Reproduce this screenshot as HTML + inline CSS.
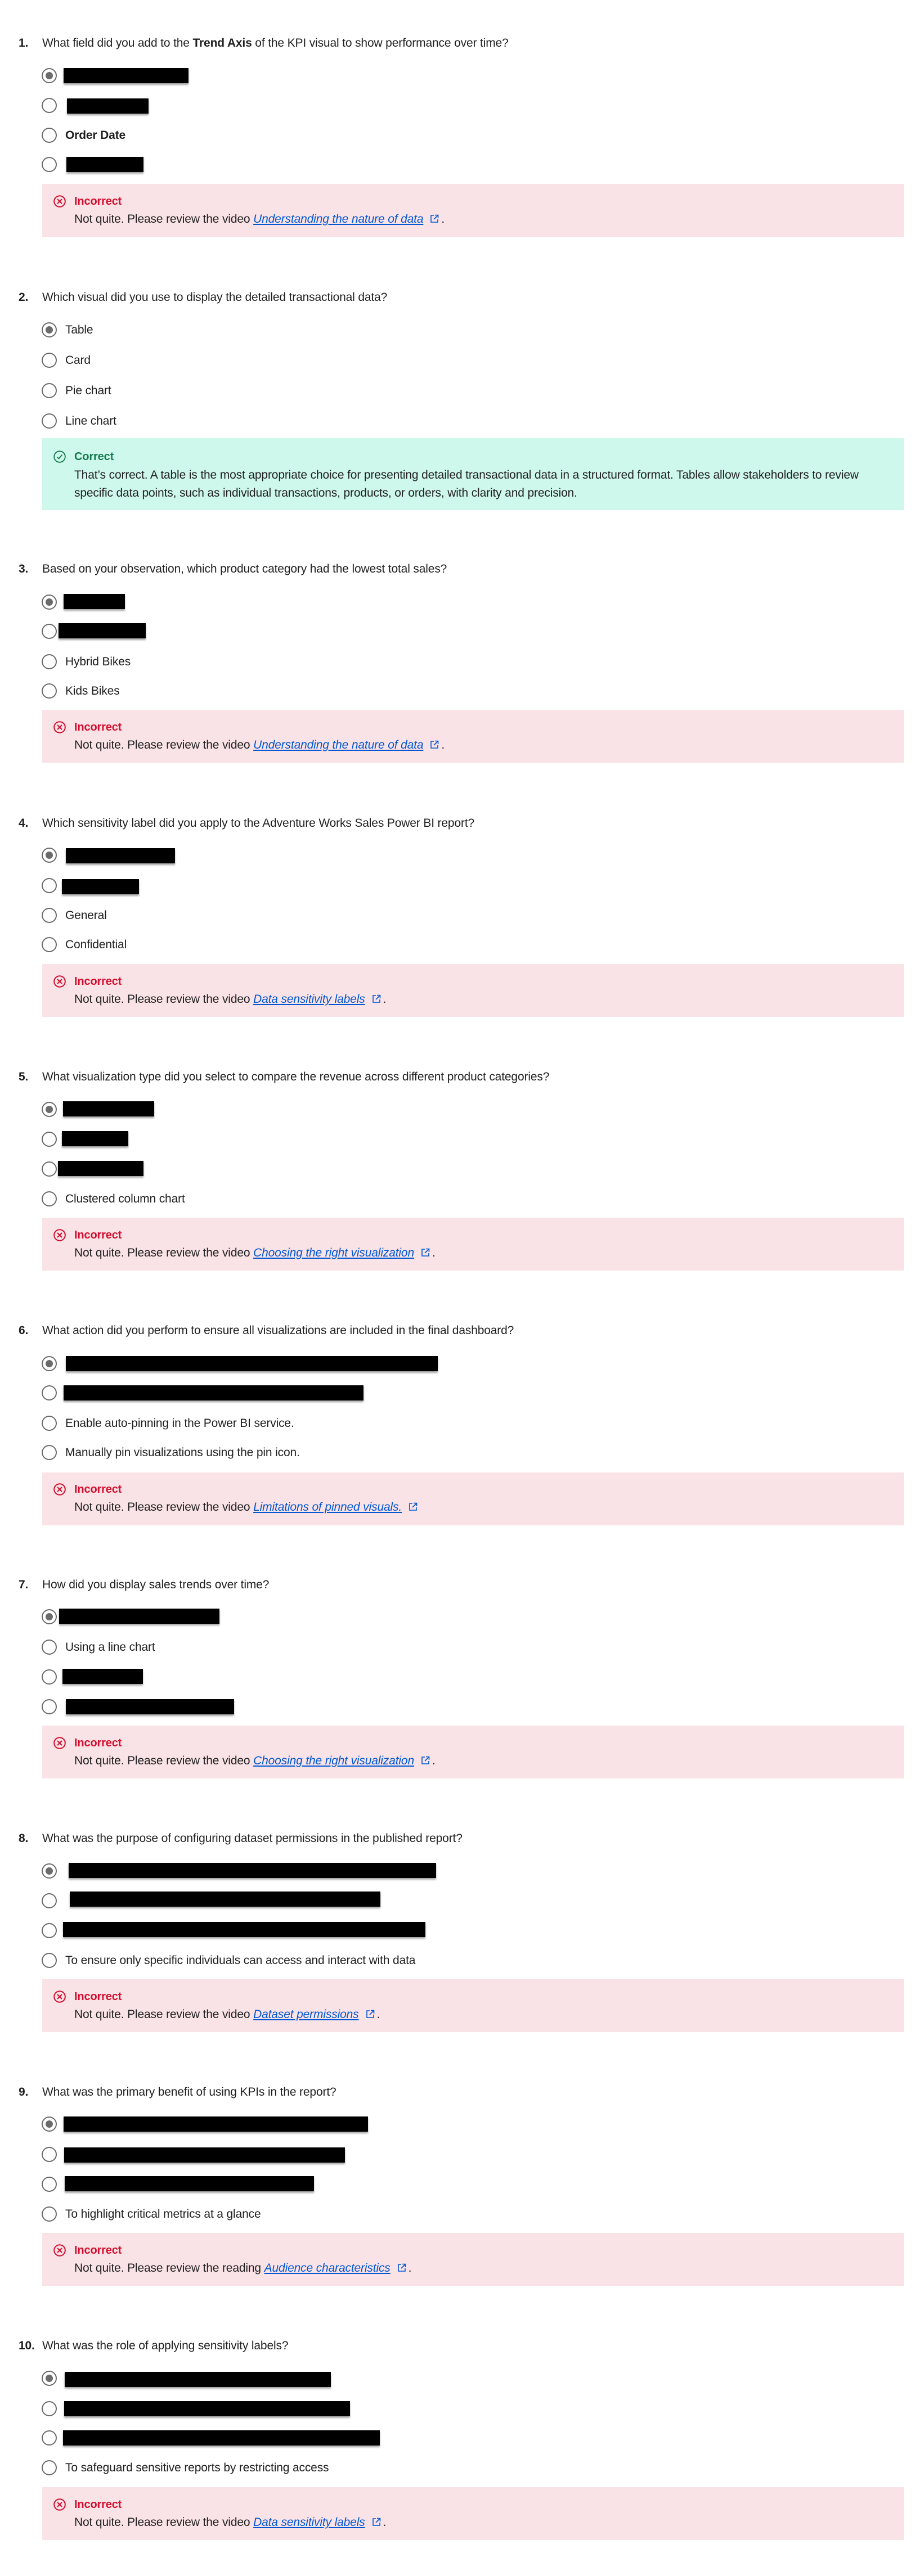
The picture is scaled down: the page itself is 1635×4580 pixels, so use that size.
<!DOCTYPE html>
<html><head><meta charset="utf-8"><style>
*{margin:0;padding:0;box-sizing:border-box}
body{width:1635px;height:4580px;background:#fff;position:relative;overflow:hidden;font-family:"Liberation Sans",sans-serif;color:#1f1f1f;font-size:21px;letter-spacing:-0.15px}
.q{position:absolute;left:0;width:1635px;height:1px}
.q>*{position:absolute;white-space:nowrap;line-height:30px}
.n{left:33px;font-weight:bold}
.t{left:75px}
.r{left:74px;width:27px;height:27px;border:2px solid #6b6b6b;border-radius:50%;line-height:normal}
.r.s::after{content:"";position:absolute;left:5px;top:5px;width:13px;height:13px;border-radius:50%;background:#6b6b6b}
.o{left:116px}
.b{background:#000;height:27px;box-shadow:0 3px 3px rgba(0,0,0,.35)}
.box{left:75px;width:1532px;height:94px;background:#fae3e7}
.box.ok{background:#cff8ec;height:128px}
.ic{left:95px;width:22px;height:22px;line-height:normal}
.lab{left:132px;font-weight:bold;color:#d30d2d;font-size:20px}
.lab.g{color:#137a4e}
.msg{left:132px}
.msg a{color:#0056d2;font-style:italic;text-decoration:underline}
.ext{display:inline-block;width:16px;height:16px;margin:0 4px 0 12px;vertical-align:-1px}
</style></head><body>

<svg width="0" height="0" style="position:absolute">
<defs>
<symbol id="x" viewBox="0 0 22 22"><circle cx="11" cy="11" r="9.8" fill="none" stroke="#d30d2d" stroke-width="2"/><path d="M7 7L15 15M15 7L7 15" stroke="#d30d2d" stroke-width="2"/></symbol>
<symbol id="e" viewBox="0 0 16 16"><path d="M7 2H2v12h12V9" fill="none" stroke="#0056d2" stroke-width="1.6"/><path d="M9 1.5h5.5V7M14.5 1.5L7 9" fill="none" stroke="#0056d2" stroke-width="1.6"/></symbol>
</defs></svg>

<!-- Q1 -->
<div class="q" style="top:77px">
<div class="n" style="top:-15px">1.</div>
<div class="t" style="top:-15px">What field did you add to the <b>Trend Axis</b> of the KPI visual to show performance over time?</div>
<div class="r s" style="top:44px"></div><div class="b" style="left:113px;width:222px;top:44px"></div>
<div class="r" style="top:97px"></div><div class="b" style="left:119px;width:145px;top:98px"></div>
<div class="r" style="top:150px"></div><div class="o" style="top:149px;font-weight:bold">Order Date</div>
<div class="r" style="top:202px"></div><div class="b" style="left:118px;width:137px;top:202px"></div>
<div class="box" style="top:250px"></div>
<svg class="ic" style="top:270px"><use href="#x"/></svg>
<div class="lab" style="top:266px">Incorrect</div>
<div class="msg" style="top:298px">Not quite. Please review the video <a>Understanding the nature of data</a><svg class="ext"><use href="#e"/></svg>.</div>
</div>

<!-- Q2 -->
<div class="q" style="top:529px">
<div class="n" style="top:-15px">2.</div>
<div class="t" style="top:-15px">Which visual did you use to display the detailed transactional data?</div>
<div class="r s" style="top:44px"></div><div class="o" style="top:43px">Table</div>
<div class="r" style="top:98px"></div><div class="o" style="top:97px">Card</div>
<div class="r" style="top:152px"></div><div class="o" style="top:151px">Pie chart</div>
<div class="r" style="top:206px"></div><div class="o" style="top:205px">Line chart</div>
<div class="box ok" style="top:250px"></div>
<svg class="ic" style="top:272px" viewBox="0 0 22 22"><circle cx="11" cy="11" r="9.8" fill="none" stroke="#137a4e" stroke-width="1.8"/><path d="M6.5 11.5l3 3 6-7" fill="none" stroke="#137a4e" stroke-width="1.8"/></svg>
<div class="lab g" style="top:268px">Correct</div>
<div class="msg" style="top:301px">That’s correct. A table is the most appropriate choice for presenting detailed transactional data in a structured format. Tables allow stakeholders to review</div>
<div class="msg" style="top:333px">specific data points, such as individual transactions, products, or orders, with clarity and precision.</div>
</div>

<!-- Q3 -->
<div class="q" style="top:1012px">
<div class="n" style="top:-15px">3.</div>
<div class="t" style="top:-15px">Based on your observation, which product category had the lowest total sales?</div>
<div class="r s" style="top:45px"></div><div class="b" style="left:113px;width:109px;top:44px"></div>
<div class="r" style="top:97px"></div><div class="b" style="left:104px;width:155px;top:96px"></div>
<div class="r" style="top:151px"></div><div class="o" style="top:150px">Hybrid Bikes</div>
<div class="r" style="top:203px"></div><div class="o" style="top:202px">Kids Bikes</div>
<div class="box" style="top:250px"></div>
<svg class="ic" style="top:270px"><use href="#x"/></svg>
<div class="lab" style="top:266px">Incorrect</div>
<div class="msg" style="top:298px">Not quite. Please review the video <a>Understanding the nature of data</a><svg class="ext"><use href="#e"/></svg>.</div>
</div>

<!-- Q4 -->
<div class="q" style="top:1464px">
<div class="n" style="top:-15px">4.</div>
<div class="t" style="top:-15px">Which sensitivity label did you apply to the Adventure Works Sales Power BI report?</div>
<div class="r s" style="top:43px"></div><div class="b" style="left:117px;width:194px;top:44px"></div>
<div class="r" style="top:97px"></div><div class="b" style="left:110px;width:137px;top:99px"></div>
<div class="r" style="top:150px"></div><div class="o" style="top:149px">General</div>
<div class="r" style="top:202px"></div><div class="o" style="top:201px">Confidential</div>
<div class="box" style="top:250px"></div>
<svg class="ic" style="top:270px"><use href="#x"/></svg>
<div class="lab" style="top:266px">Incorrect</div>
<div class="msg" style="top:298px">Not quite. Please review the video <a>Data sensitivity labels</a><svg class="ext"><use href="#e"/></svg>.</div>
</div>

<!-- Q5 -->
<div class="q" style="top:1915px">
<div class="n" style="top:-15px">5.</div>
<div class="t" style="top:-15px">What visualization type did you select to compare the revenue across different product categories?</div>
<div class="r s" style="top:44px"></div><div class="b" style="left:112px;width:162px;top:43px"></div>
<div class="r" style="top:97px"></div><div class="b" style="left:110px;width:118px;top:96px"></div>
<div class="r" style="top:150px"></div><div class="b" style="left:103px;width:152px;top:149px"></div>
<div class="r" style="top:203px"></div><div class="o" style="top:202px">Clustered column chart</div>
<div class="box" style="top:250px"></div>
<svg class="ic" style="top:270px"><use href="#x"/></svg>
<div class="lab" style="top:266px">Incorrect</div>
<div class="msg" style="top:298px">Not quite. Please review the video <a>Choosing the right visualization</a><svg class="ext"><use href="#e"/></svg>.</div>
</div>

<!-- Q6 -->
<div class="q" style="top:2366px">
<div class="n" style="top:-15px">6.</div>
<div class="t" style="top:-15px">What action did you perform to ensure all visualizations are included in the final dashboard?</div>
<div class="r s" style="top:45px"></div><div class="b" style="left:117px;width:661px;top:45px"></div>
<div class="r" style="top:97px"></div><div class="b" style="left:113px;width:533px;top:97px"></div>
<div class="r" style="top:151px"></div><div class="o" style="top:150px">Enable auto-pinning in the Power BI service.</div>
<div class="r" style="top:203px"></div><div class="o" style="top:202px">Manually pin visualizations using the pin icon.</div>
<div class="box" style="top:252px"></div>
<svg class="ic" style="top:271px"><use href="#x"/></svg>
<div class="lab" style="top:267px">Incorrect</div>
<div class="msg" style="top:299px">Not quite. Please review the video <a>Limitations of pinned visuals.</a><svg class="ext"><use href="#e"/></svg></div>
</div>

<!-- Q7 -->
<div class="q" style="top:2818px">
<div class="n" style="top:-15px">7.</div>
<div class="t" style="top:-15px">How did you display sales trends over time?</div>
<div class="r s" style="top:43px"></div><div class="b" style="left:105px;width:285px;top:42px"></div>
<div class="r" style="top:97px"></div><div class="o" style="top:96px">Using a line chart</div>
<div class="r" style="top:150px"></div><div class="b" style="left:111px;width:143px;top:149px"></div>
<div class="r" style="top:203px"></div><div class="b" style="left:117px;width:299px;top:203px"></div>
<div class="box" style="top:250px"></div>
<svg class="ic" style="top:270px"><use href="#x"/></svg>
<div class="lab" style="top:266px">Incorrect</div>
<div class="msg" style="top:298px">Not quite. Please review the video <a>Choosing the right visualization</a><svg class="ext"><use href="#e"/></svg>.</div>
</div>

<!-- Q8 -->
<div class="q" style="top:3269px">
<div class="n" style="top:-15px">8.</div>
<div class="t" style="top:-15px">What was the purpose of configuring dataset permissions in the published report?</div>
<div class="r s" style="top:44px"></div><div class="b" style="left:122px;width:653px;top:43px"></div>
<div class="r" style="top:97px"></div><div class="b" style="left:124px;width:552px;top:94px"></div>
<div class="r" style="top:150px"></div><div class="b" style="left:112px;width:644px;top:148px"></div>
<div class="r" style="top:203px"></div><div class="o" style="top:202px">To ensure only specific individuals can access and interact with data</div>
<div class="box" style="top:250px"></div>
<svg class="ic" style="top:270px"><use href="#x"/></svg>
<div class="lab" style="top:266px">Incorrect</div>
<div class="msg" style="top:298px">Not quite. Please review the video <a>Dataset permissions</a><svg class="ext"><use href="#e"/></svg>.</div>
</div>

<!-- Q9 -->
<div class="q" style="top:3720px">
<div class="n" style="top:-15px">9.</div>
<div class="t" style="top:-15px">What was the primary benefit of using KPIs in the report?</div>
<div class="r s" style="top:43px"></div><div class="b" style="left:113px;width:541px;top:43px"></div>
<div class="r" style="top:97px"></div><div class="b" style="left:114px;width:499px;top:98px"></div>
<div class="r" style="top:150px"></div><div class="b" style="left:115px;width:443px;top:149px"></div>
<div class="r" style="top:203px"></div><div class="o" style="top:202px">To highlight critical metrics at a glance</div>
<div class="box" style="top:250px"></div>
<svg class="ic" style="top:270px"><use href="#x"/></svg>
<div class="lab" style="top:266px">Incorrect</div>
<div class="msg" style="top:298px">Not quite. Please review the reading <a>Audience characteristics</a><svg class="ext"><use href="#e"/></svg>.</div>
</div>

<!-- Q10 -->
<div class="q" style="top:4171px">
<div class="n" style="top:-15px">10.</div>
<div class="t" style="top:-15px">What was the role of applying sensitivity labels?</div>
<div class="r s" style="top:44px"></div><div class="b" style="left:115px;width:473px;top:46px"></div>
<div class="r" style="top:98px"></div><div class="b" style="left:114px;width:508px;top:98px"></div>
<div class="r" style="top:150px"></div><div class="b" style="left:112px;width:563px;top:150px"></div>
<div class="r" style="top:203px"></div><div class="o" style="top:202px">To safeguard sensitive reports by restricting access</div>
<div class="box" style="top:251px"></div>
<svg class="ic" style="top:271px"><use href="#x"/></svg>
<div class="lab" style="top:267px">Incorrect</div>
<div class="msg" style="top:299px">Not quite. Please review the video <a>Data sensitivity labels</a><svg class="ext"><use href="#e"/></svg>.</div>
</div>

</body></html>
